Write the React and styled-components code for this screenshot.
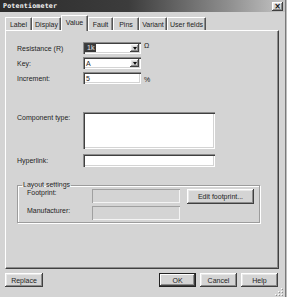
import React from 'react';
import styled, { createGlobalStyle } from 'styled-components';

const Global = createGlobalStyle`
  html, body { margin: 0; padding: 0; background: #d4d4d4; }
  body { font-family: "Liberation Sans", Arial, sans-serif; font-size: 7px; color: #1e1e1e; }
  * { box-sizing: border-box; }
`;

const raised = `
  background: #d4d4d4;
  box-shadow: inset -1px -1px 0 #404040, inset 1px 1px 0 #ffffff, inset -2px -2px 0 #8c8c8c, inset 2px 2px 0 #e8e8e8;
`;

const sunken = `
  box-shadow: inset 1px 1px 0 #8c8c8c, inset 2px 2px 0 #404040, inset -1px -1px 0 #ffffff, inset -2px -2px 0 #d4d4d4;
`;

const Window = styled.div`
  width: 287px;
  height: 297px;
  background: #d4d4d4;
  display: flex;
  flex-direction: column;
  position: relative;
  border-right: 1px solid #7a7a7a;
  box-shadow: 1px 0 0 #bdbdbd;
  width: 286px;
`;

const TitleBar = styled.div`
  height: 12px;
  display: flex;
  align-items: center;
  justify-content: space-between;
  padding: 0 2px 0 3px;
  background: linear-gradient(to right, #2c2c2c 0%, #3c3c3c 45%, #8e8e8e 80%, #c4c4c4 100%);
`;

const Title = styled.span`
  font-family: "DejaVu Sans Mono", "Liberation Mono", monospace;
  font-weight: bold;
  font-size: 6.6px;
  color: #f4f4f4;
  letter-spacing: 0.2px;
`;

const CloseBtn = styled.div`
  ${raised}
  width: 11px;
  height: 9px;
  display: flex;
  align-items: center;
  justify-content: center;
  font-family: "DejaVu Sans", sans-serif;
  font-weight: bold;
  font-size: 8px;
  line-height: 1;
  color: #111;
  margin-top: 1px;
`;

const Main = styled.div`
  padding: 3px 6px 0 5px;
  display: flex;
  flex-direction: column;
`;

const TabsRow = styled.div`
  display: flex;
  align-items: flex-end;
  height: 15px;
  position: relative;
  z-index: 1;
`;

const Tab = styled.div`
  width: ${p => p.w}px;
  height: ${p => (p.active ? 16 : 13)}px;
  margin-bottom: ${p => (p.active ? -1 : 0)}px;
  display: flex;
  align-items: center;
  justify-content: center;
  padding-bottom: ${p => (p.active ? 2 : 0)}px;
  background: #d4d4d4;
  border-top: 1px solid #ffffff;
  border-left: 1px solid #ffffff;
  border-right: 1px solid #555;
  box-shadow: inset -1px 0 0 #8c8c8c;
  border-radius: 1px 1px 0 0;
  white-space: nowrap;
`;

const Panel = styled.div`
  height: 239px;
  border-top: 1px solid #ffffff;
  border-left: 1px solid #ffffff;
  border-right: 1px solid #404040;
  border-bottom: 1px solid #404040;
  box-shadow: inset -1px -1px 0 #8c8c8c;
  padding: 11px 0 0 11px;
  display: flex;
  flex-direction: column;
`;

const Row = styled.div`
  display: flex;
  align-items: ${p => (p.top ? 'flex-start' : 'center')};
  margin-top: ${p => p.mt || 0}px;
`;

const Label = styled.div`
  width: ${p => p.w || 66}px;
  padding-top: ${p => p.pt || 0}px;
  white-space: nowrap;
`;

const Combo = styled.div`
  ${sunken}
  background: #fff;
  width: 58px;
  height: 12px;
  display: flex;
  align-items: center;
  justify-content: space-between;
  padding: 2px;
`;

const ComboText = styled.span`
  padding-left: 1px;
  ${p => p.sel && `
    background: #3a3a3a;
    color: #e6e6e6;
    padding: 0 2px;
    line-height: 8px;
  `}
`;

const ArrowBtn = styled.div`
  ${raised}
  width: 9px;
  height: 8px;
  display: flex;
  align-items: center;
  justify-content: center;
  &::after {
    content: "";
    border-left: 2.5px solid transparent;
    border-right: 2.5px solid transparent;
    border-top: 3px solid #111;
  }
`;

const Edit = styled.div`
  ${sunken}
  background: ${p => (p.disabled ? '#d4d4d4' : '#ffffff')};
  ${p => p.disabled && `box-shadow: inset 1px 1px 0 #a0a0a0, inset -1px -1px 0 #f4f4f4;`}
  width: ${p => p.w}px;
  height: ${p => p.h}px;
  padding: 2px 3px;
  display: flex;
  align-items: center;
`;

const Unit = styled.span`
  margin-left: 3px;
  font-size: 7px;
  align-self: flex-start;
  margin-top: ${p => p.mt || 0}px;
`;

const Group = styled.fieldset`
  margin: 14px 0 0 0;
  width: 243px;
  height: 42px;
  padding: 0 0 0 9px;
  border: 1px solid #9c9c9c;
  box-shadow: inset 1px 1px 0 #ffffff, 1px 1px 0 #ffffff;
  display: flex;
  flex-direction: column;
  gap: 2px;
`;

const Legend = styled.legend`
  padding: 0 1px;
  margin-left: -5px;
  line-height: 8px;
`;

const Button = styled.div`
  ${raised}
  width: ${p => p.w}px;
  height: ${p => p.h || 14}px;
  display: flex;
  align-items: center;
  justify-content: center;
  white-space: nowrap;
  ${p => p.def && `
    box-shadow: inset 0 0 0 1px #222, inset -2px -2px 0 #404040, inset 2px 2px 0 #ffffff, inset -3px -3px 0 #8c8c8c;
  `}
`;

const ButtonRow = styled.div`
  display: flex;
  justify-content: space-between;
  margin-top: 4px;
  padding-right: 1px;
`;

const RightButtons = styled.div`
  display: flex;
  gap: 4px;
`;

const Grip = styled.svg`
  position: absolute;
  right: 2px;
  bottom: 1px;
`;

const tabs = [
  ['Label', 27], ['Display', 29], ['Value', 27], ['Fault', 25],
  ['Pins', 26], ['Variant', 28], ['User fields', 39],
];

export default function App() {
  return (
    <>
      <Global />
      <Window>
        <TitleBar>
          <Title>Potentiometer</Title>
          <CloseBtn>×</CloseBtn>
        </TitleBar>
        <Main>
          <TabsRow>
            {tabs.map(([t, w]) => (
              <Tab key={t} w={w} active={t === 'Value'}>{t}</Tab>
            ))}
          </TabsRow>
          <Panel>
            <Row>
              <Label>Resistance (R)</Label>
              <Combo>
                <ComboText sel>1k</ComboText>
                <ArrowBtn />
              </Combo>
              <Unit>Ω</Unit>
            </Row>
            <Row mt={3}>
              <Label>Key:</Label>
              <Combo>
                <ComboText>A</ComboText>
                <ArrowBtn />
              </Combo>
            </Row>
            <Row mt={3}>
              <Label>Increment:</Label>
              <Edit w={58} h={12}>5</Edit>
              <Unit mt={4}>%</Unit>
            </Row>
            <Row top mt={28}>
              <Label pt={2}>Component type:</Label>
              <Edit w={132} h={37} />
            </Row>
            <Row mt={5}>
              <Label>Hyperlink:</Label>
              <Edit w={132} h={13} />
            </Row>
            <Group>
              <Legend>Layout settings</Legend>
              <Row top>
                <Label w={65}>Footprint:</Label>
                <Edit disabled w={88} h={14} />
                <Button w={67} h={15} style={{ marginLeft: 7 }}>Edit footprint...</Button>
              </Row>
              <Row top>
                <Label w={65} pt={1}>Manufacturer:</Label>
                <Edit disabled w={88} h={14} />
              </Row>
            </Group>
          </Panel>
          <ButtonRow>
            <Button w={38}>Replace</Button>
            <RightButtons>
              <Button w={37} def>OK</Button>
              <Button w={37}>Cancel</Button>
              <Button w={37}>Help</Button>
            </RightButtons>
          </ButtonRow>
        </Main>
        <Grip width="8" height="8" viewBox="0 0 8 8">
          {[[6, 0], [6, 3], [3, 3], [6, 6], [3, 6], [0, 6]].map(([x, y]) => (
            <g key={`${x}-${y}`}>
              <rect x={x} y={y} width="1" height="1" fill="#ffffff" />
              <rect x={x + 1} y={y + 1} width="1" height="1" fill="#8c8c8c" />
            </g>
          ))}
        </Grip>
      </Window>
    </>
  );
}
